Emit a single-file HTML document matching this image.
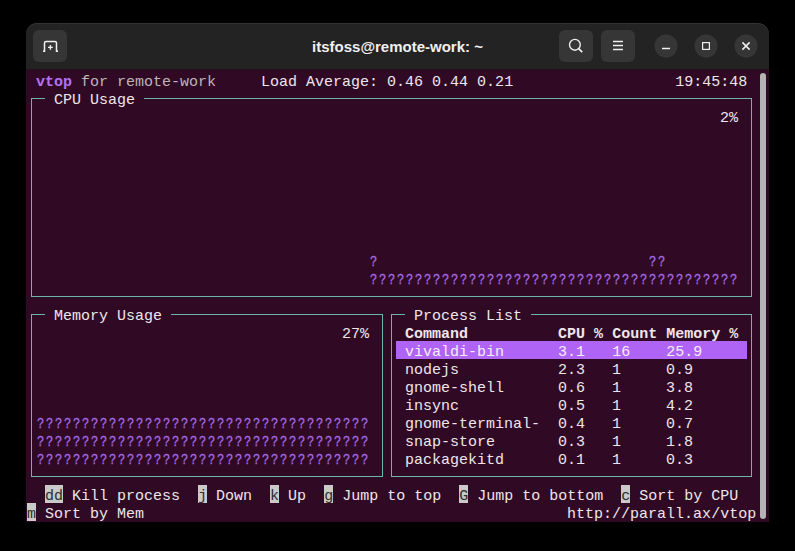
<!DOCTYPE html>
<html><head><meta charset="utf-8"><title>vtop</title>
<style>
html,body{margin:0;padding:0}
body{width:795px;height:551px;background:#000;overflow:hidden;position:relative}
.win{position:absolute;left:26px;top:23px;width:743px;height:499px;border-radius:11px 11px 0 0;overflow:hidden;background:#232323}
.tbg{position:absolute;left:0;top:47px;width:743px;height:452px;background:#300a24}
.hdr{position:absolute;left:0;top:0;width:743px;height:46px;background:#232323;border-radius:11px 11px 0 0;box-shadow:inset 0 1px #343434}
.btn{position:absolute;top:7px;width:34px;height:32px;border-radius:6px;background:#363636}
.circ{position:absolute;top:11.5px;width:23px;height:23px;border-radius:50%;background:#363636}
.title{position:absolute;left:0;top:15px;width:743px;text-align:center;font-family:"Liberation Sans",sans-serif;font-weight:bold;font-size:15px;line-height:18px;color:#f0f0f0}
.sb{position:absolute;left:734px;top:50px;width:6px;height:446px;border-radius:3px;background:#b4b4b4}
.term{position:absolute;left:27px;top:74px;margin:0;font-family:"Liberation Mono",monospace;font-size:15px;line-height:18px;white-space:pre;color:#eee6ea}
.b{font-weight:bold}
.pu{color:#b271f0}
.dim{color:#bdb5b8}
.gq{position:absolute;font-family:"Liberation Mono",monospace;font-size:15px;line-height:18px;white-space:pre;letter-spacing:2.25px;transform:scaleX(0.8);transform-origin:0 0;color:#a86ae4;-webkit-text-stroke:0.3px #a86ae4}
.sel{position:absolute;background:#b064f6}
.st{color:#f4eefa}
.key{position:absolute;background:#cacaca}
.kt{color:#2c2c2c}
.ln{position:absolute;background:#68b6ae}
</style></head><body>
<div class="win">
<div class="tbg"></div>
<div class="hdr">
<div class="btn" style="left:7px"><svg width="34" height="32" viewBox="0 0 34 32"><path d="M10 21.3h1.5v-8.3a1.6 1.6 0 0 1 1.6-1.6h8.8a1.6 1.6 0 0 1 1.6 1.6v8.3h1.5" fill="none" stroke="#f2f2f2" stroke-width="1.5"/><path d="M17.4 15v4.8M15 17.4h4.8" stroke="#f2f2f2" stroke-width="1.4"/></svg></div>
<div class="title">itsfoss@remote-work: ~</div>
<div class="btn" style="left:533px"><svg width="34" height="32" viewBox="0 0 34 32"><circle cx="15.9" cy="14.8" r="5.4" fill="none" stroke="#eee" stroke-width="1.4"/><path d="M19.7 18.6l3.5 3.5" stroke="#eee" stroke-width="1.8"/></svg></div>
<div class="btn" style="left:575px"><svg width="34" height="32" viewBox="0 0 34 32"><path d="M12 11.5h10M12 15.5h10M12 19.5h10" stroke="#eee" stroke-width="1.4"/></svg></div>
<svg style="position:absolute;left:0;top:0" width="743" height="46" viewBox="0 0 743 46"><circle cx="640" cy="23" r="11.5" fill="#363636"/><circle cx="680" cy="23" r="11.5" fill="#363636"/><circle cx="720" cy="23" r="11.5" fill="#363636"/><path d="M636 25.5h8" stroke="#f0f0f0" stroke-width="1.4"/><rect x="676.6" y="19.6" width="6.8" height="6.8" fill="none" stroke="#f0f0f0" stroke-width="1.2"/><path d="M716.4 19.4l7.2 7.2M723.6 19.4l-7.2 7.2" stroke="#f0f0f0" stroke-width="1.5"/></svg>
</div>
<div class="sb"></div>
<div style="position:absolute;left:0;top:46px;width:743px;height:1px;background:#1e1219"></div>
</div>
<div class="ln" style="left:31px;top:98px;width:14px;height:1px"></div><div class="ln" style="left:144px;top:98px;width:608px;height:1px"></div><div class="ln" style="left:31px;top:296px;width:721px;height:1px"></div><div class="ln" style="left:31px;top:98px;width:1px;height:199px"></div><div class="ln" style="left:751px;top:98px;width:1px;height:199px"></div><div class="ln" style="left:31px;top:314px;width:14px;height:1px"></div><div class="ln" style="left:171px;top:314px;width:212px;height:1px"></div><div class="ln" style="left:31px;top:476px;width:352px;height:1px"></div><div class="ln" style="left:31px;top:314px;width:1px;height:163px"></div><div class="ln" style="left:382px;top:314px;width:1px;height:163px"></div><div class="ln" style="left:391px;top:314px;width:14px;height:1px"></div><div class="ln" style="left:531px;top:314px;width:221px;height:1px"></div><div class="ln" style="left:391px;top:476px;width:361px;height:1px"></div><div class="ln" style="left:391px;top:314px;width:1px;height:163px"></div><div class="ln" style="left:751px;top:314px;width:1px;height:163px"></div><div class="sel" style="left:396px;top:341px;width:351px;height:18px"></div><div class="gq" style="left:369.9px;top:254px">?</div><div class="gq" style="left:648.9px;top:254px">??</div><div class="gq" style="left:369.9px;top:272px">?????????????????????????????????????????</div><div class="gq" style="left:36.9px;top:416px">?????????????????????????????????????</div><div class="gq" style="left:36.9px;top:434px">?????????????????????????????????????</div><div class="gq" style="left:36.9px;top:452px">?????????????????????????????????????</div><div class="key" style="left:45px;top:485px;width:18px;height:18px"></div><div class="key" style="left:198px;top:485px;width:9px;height:18px"></div><div class="key" style="left:270px;top:485px;width:9px;height:18px"></div><div class="key" style="left:324px;top:485px;width:9px;height:18px"></div><div class="key" style="left:459px;top:485px;width:9px;height:18px"></div><div class="key" style="left:621px;top:485px;width:9px;height:18px"></div><div class="key" style="left:27px;top:503px;width:9px;height:18px"></div>
<pre class="term"> <span class="b pu">vtop</span> <span class="dim">for remote-work</span>     Load Average: 0.46 0.44 0.21                  19:45:48
   CPU Usage
                                                                             2%










   Memory Usage                            Process List
                                   27%    <span class="b">Command</span>          <span class="b">CPU %</span> <span class="b">Count</span> <span class="b">Memory %</span>
                                          <span class="st">vivaldi-bin</span>      <span class="st">3.1</span>   <span class="st">16</span>    <span class="st">25.9</span>
                                          nodejs           2.3   1     0.9
                                          gnome-shell      0.6   1     3.8
                                          insync           0.5   1     4.2
                                          gnome-terminal-  0.4   1     0.7
                                          snap-store       0.3   1     1.8
                                          packagekitd      0.1   1     0.3

  <span class="kt">dd</span> Kill process  <span class="kt">j</span> Down  <span class="kt">k</span> Up  <span class="kt">g</span> Jump to top  <span class="kt">G</span> Jump to bottom  <span class="kt">c</span> Sort by CPU
<span class="kt">m</span> Sort by Mem                                               http://parall.ax/vtop</pre>
</body></html>
